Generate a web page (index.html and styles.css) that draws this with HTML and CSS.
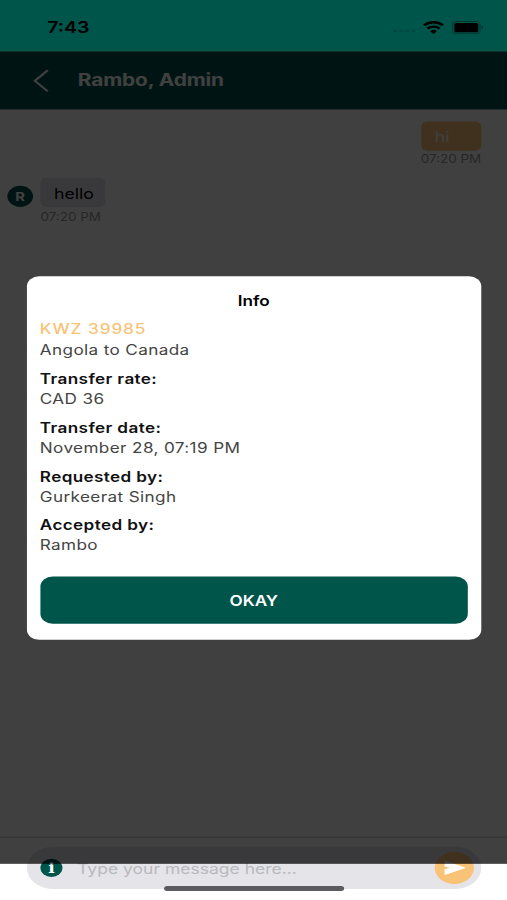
FILE: index.html
```html
<!DOCTYPE html>
<html lang="en">

<head>
    <meta charset="UTF-8">
    <meta name="viewport" content="width=device-width, initial-scale=1.0">
    <title>Chat</title>
    <link rel="stylesheet" href="styles.css">
</head>

<body>
    <div class="phone">
        <div class="status">
            <span class="clock">7:43</span>
            <div class="status-icons">
                <span class="signal"><i></i><i></i><i></i><i></i></span>
                <svg class="wifi" width="18" height="13" viewBox="0 0 18 13">
                    <path d="M1.3 4.3a11 11 0 0 1 15.4 0M4 7.5a7.2 7.2 0 0 1 10 0" fill="none" stroke="#000" stroke-width="2.3" />
                    <path d="M6.2 10a4 4 0 0 1 5.6 0L9 12.8z" />
                </svg>
                <svg class="battery" width="26" height="13" viewBox="0 0 26 13">
                    <rect x=".5" y=".5" width="22.5" height="12" rx="3" fill="none" stroke="#000" stroke-opacity=".35" />
                    <rect x="2" y="2" width="19.5" height="9" rx="1.5" />
                    <path d="M24.3 4.5v4q1.2-.7 1.2-2t-1.2-2" fill-opacity=".4" />
                </svg>
            </div>
        </div>

        <div class="header">
            <svg class="back" width="13" height="23" viewBox="0 0 13 23">
                <path d="M12 1L1.5 11.5L12 22" fill="none" stroke="#fff" stroke-width="2" />
            </svg>
            <h1>Rambo, Admin</h1>
        </div>

        <div class="chat">
            <div class="message sent">
                <p class="bubble">hi</p>
                <span class="time">07:20 PM</span>
            </div>
            <div class="message received">
                <span class="avatar">R</span>
                <div>
                    <p class="bubble">hello</p>
                    <span class="time">07:20 PM</span>
                </div>
            </div>
        </div>

        <div class="footer">
            <div class="input">
                <span class="info">i</span>
                <span class="placeholder">Type your message here...</span>
                <span class="send">
                    <svg width="19" height="16" viewBox="0 0 19 16">
                        <path d="M1.5 1.5l16 6.5L1.5 14.5V9.6L8 8L1.5 6.4z" fill="#fff" stroke="#fff" stroke-linejoin="round" />
                    </svg>
                </span>
            </div>
        </div>

        <div class="overlay">
            <div class="modal">
                <h2>Info</h2>
                <dl>
                    <dt class="amount">KWZ 39985</dt>
                    <dd>Angola to Canada</dd>
                    <dt>Transfer rate:</dt>
                    <dd>CAD 36</dd>
                    <dt>Transfer date:</dt>
                    <dd>November 28, 07:19 PM</dd>
                    <dt>Requested by:</dt>
                    <dd>Gurkeerat Singh</dd>
                    <dt>Accepted by:</dt>
                    <dd>Rambo</dd>
                </dl>
                <button>OKAY</button>
            </div>
        </div>
        <div class="home-bar"></div>
    </div>
</body>

</html>
```

FILE: styles.css
```css
* {
    margin: 0;
    padding: 0;
    box-sizing: border-box;
}

body {
    width: 507px;
    height: 900px;
    overflow: hidden;
    font-family: Inter, "Liberation Sans", sans-serif;
}

/* 414x896 screen stretched over the whole window */
.phone {
    position: relative;
    display: flex;
    flex-direction: column;
    width: 414px;
    height: 896px;
    background-color: #fff;
    transform: scale(1.22464, 1.00446);
    transform-origin: 0 0;
}

.status {
    display: flex;
    justify-content: space-between;
    height: 51px;
    padding: 17px 19px 0 38.5px;
    background-color: #00554b;
}

.clock {
    font-size: 16px;
    font-weight: 600;
    line-height: 20px;
}

.status-icons {
    display: flex;
    height: 20px;
    align-items: center;
}

.signal {
    display: flex;
    gap: 2px;
    margin: 8px 6px 0 0;
}

.signal i {
    width: 3px;
    height: 2px;
    background-color: rgba(0, 0, 0, .15);
}

.wifi {
    margin-right: 6px;
}

.header {
    display: flex;
    align-items: center;
    height: 58px;
    padding-left: 27px;
    background-color: #00554b;
}

.header h1 {
    margin-left: 23.5px;
    color: #fff;
    font-size: 17px;
    font-weight: 700;
    letter-spacing: -.1px;
}

.chat {
    flex: 1;
    padding: 12px 21px 0 6px;
}

.message {
    display: flex;
}

.sent {
    flex-direction: column;
    align-items: flex-end;
}

.bubble {
    height: 29px;
    padding: 0 11px;
    border-radius: 5px;
    background-color: #e4e4e9;
    font-size: 14.5px;
    line-height: 29px;
}

.sent .bubble {
    width: 49px;
    background-color: #f9c377;
    color: #fff;
}

.time {
    display: block;
    color: #999;
    font-size: 11px;
    line-height: 16px;
}

.received {
    margin-top: 11px;
}

.received .bubble {
    width: 53px;
    margin-bottom: 2px;
    line-height: 31px;
}

.avatar {
    width: 21px;
    height: 21px;
    margin: 8px 6px 0 0;
    border-radius: 50%;
    background-color: #00554b;
    color: #fff;
    font-size: 12px;
    font-weight: 700;
    line-height: 21px;
    text-align: center;
}

.footer {
    height: 63px;
    padding: 9px 21px 0 22px;
    border-top: 1px solid #ccc;
}

.input {
    display: flex;
    align-items: center;
    height: 42px;
    padding: 0 6px 0 11px;
    border-radius: 21px;
    background-color: #e4e4e9;
}

.info {
    width: 18px;
    height: 18px;
    border-radius: 50%;
    background-color: #00554b;
    color: #fff;
    font: bold 14px/18px "DejaVu Serif", serif;
    text-align: center;
}

.placeholder {
    flex: 1;
    margin-left: 12px;
    color: #b9b9be;
    font-size: 14.3px;
}

.send {
    display: flex;
    align-items: center;
    justify-content: center;
    width: 32px;
    height: 32px;
    border-radius: 50%;
    background-color: #f9c377;
}

/* dims everything between the status bar and the bottom safe area */
.overlay {
    position: absolute;
    top: 51px;
    left: 0;
    display: flex;
    align-items: center;
    justify-content: center;
    width: 414px;
    height: 809px;
    background-color: rgba(0, 0, 0, .75);
}

.modal {
    width: 371px;
    height: 362px;
    padding: 15px 10.5px 0 11px;
    border-radius: 10px;
    background-color: #fff;
}

.modal h2 {
    font-size: 14px;
    font-weight: 600;
    line-height: 20px;
    text-align: center;
}

.modal dl {
    height: 246px;
    font-size: 14px;
    letter-spacing: .3px;
    line-height: 20px;
}

.modal dt {
    padding-top: 8.8px;
    color: #111;
    font-weight: 600;
}

.modal dt.amount {
    color: #f9c377;
    font-weight: 500;
    letter-spacing: .75px;
}

.modal dd {
    color: #444;
}

.modal button {
    display: block;
    width: 100%;
    height: 47px;
    margin-top: 18px;
    border: none;
    border-radius: 10px;
    background-color: #00554b;
    color: #fff;
    font-family: inherit;
    font-size: 14px;
    font-weight: 600;
}

.home-bar {
    position: absolute;
    bottom: 9px;
    left: 134px;
    width: 147px;
    height: 5px;
    border-radius: 3px;
    background-color: #5b5b5d;
}
```
